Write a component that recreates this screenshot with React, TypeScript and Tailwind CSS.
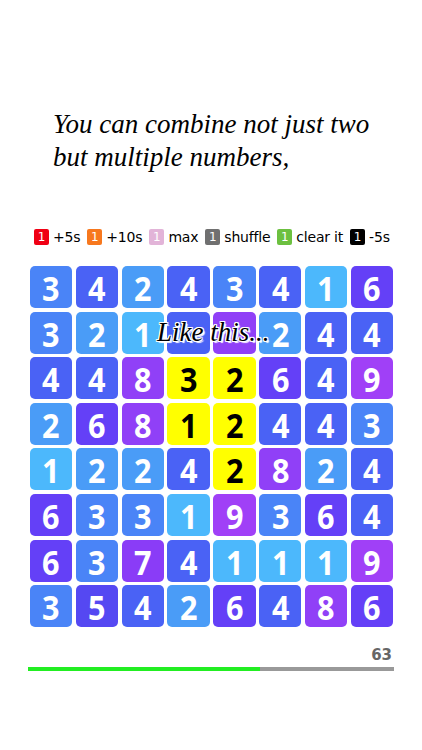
import React from "react";

const grid: number[][] = [
  [3, 4, 2, 4, 3, 4, 1, 6],
  [3, 2, 1, 4, 8, 2, 4, 4],
  [4, 4, 8, 3, 2, 6, 4, 9],
  [2, 6, 8, 1, 2, 4, 4, 3],
  [1, 2, 2, 4, 2, 8, 2, 4],
  [6, 3, 3, 1, 9, 3, 6, 4],
  [6, 3, 7, 4, 1, 1, 1, 9],
  [3, 5, 4, 2, 6, 4, 8, 6],
];

const yellow = new Set(["2-3", "2-4", "3-3", "3-4", "4-4"]);
const hidden = new Set(["1-3", "1-4"]);

const colorClass: Record<number, string> = {
  1: "bg-[#4cb8fc]",
  2: "bg-[#4a9cf7]",
  3: "bg-[#4a84f7]",
  4: "bg-[#4a62f5]",
  5: "bg-[#5548f2]",
  6: "bg-[#6440f7]",
  7: "bg-[#8a3cf7]",
  8: "bg-[#9040f7]",
  9: "bg-[#a040f7]",
};

const legend = [
  { bg: "bg-[#f00014]", label: "+5s" },
  { bg: "bg-[#f7781e]", label: "+10s" },
  { bg: "bg-[#e2b4d8]", label: "max" },
  { bg: "bg-[#707070]", label: "shuffle" },
  { bg: "bg-[#6cc040]", label: "clear it" },
  { bg: "bg-black", label: "-5s" },
];

export default function App() {
  return (
    <div className="w-[422px] h-[750px] bg-white flex flex-col overflow-hidden">
      <div
        className="mt-[108px] ml-[53px] text-[27px] leading-[33px] italic text-black"
        style={{ fontFamily: '"Liberation Serif", serif' }}
      >
        <div>You can combine not just two</div>
        <div>but multiple numbers,</div>
      </div>

      <div
        className="mt-[54px] ml-[34px] flex items-center h-[18px] text-[14px] text-black"
        style={{ fontFamily: '"DejaVu Sans", sans-serif' }}
      >
        {legend.map((l, i) => (
          <div key={i} className="flex items-center mr-[7px]">
            <div
              className={`${l.bg} w-[15px] h-[16px] rounded-[2px] text-white text-[12px] flex items-center justify-center mr-[4px]`}
            >
              1
            </div>
            <span className="tracking-[-0.2px]">{l.label}</span>
          </div>
        ))}
      </div>

      <div className="relative mt-[20px] ml-[30px] w-[363px]">
        <div
          className="grid grid-cols-8 gap-[3.6px]"
          style={{ fontFamily: '"Open Sans", sans-serif' }}
        >
          {grid.map((row, r) =>
            row.map((n, c) => {
              const key = `${r}-${c}`;
              const isY = yellow.has(key);
              return (
                <div
                  key={key}
                  className={`h-[42px] rounded-[5px] flex items-center justify-center text-[34px] font-bold leading-none ${
                    isY ? "bg-[#ffff00] text-black" : `${colorClass[n]} text-white`
                  }`}
                >
                  <span className="translate-y-[1px] scale-x-[0.9]">{hidden.has(key) ? "" : n}</span>
                </div>
              );
            })
          )}
        </div>
        <div
          className="absolute left-[127px] top-[53px] text-[27px] italic text-black leading-none"
          style={{
            fontFamily: '"Liberation Serif", serif',
            textShadow:
              "1px 1px 0 #fff, -1px -1px 0 #fff, 1px -1px 0 #fff, -1px 1px 0 #fff, 0 1px 0 #fff, 0 -1px 0 #fff, 1px 0 0 #fff, -1px 0 0 #fff, 2px 2px 1px #fff",
          }}
        >
          Like this...
        </div>
      </div>

      <div className="mt-[21px] ml-[28px] w-[366px] flex flex-col">
        <div
          className="self-end text-[15px] font-bold text-[#666] leading-none mr-[2px]"
          style={{ fontFamily: '"DejaVu Sans", sans-serif' }}
        >
          63
        </div>
        <div className="mt-[4px] h-[4px] w-full bg-[#999] flex">
          <div className="h-full bg-[#22ee22]" style={{ width: "63.5%" }} />
        </div>
      </div>
    </div>
  );
}
